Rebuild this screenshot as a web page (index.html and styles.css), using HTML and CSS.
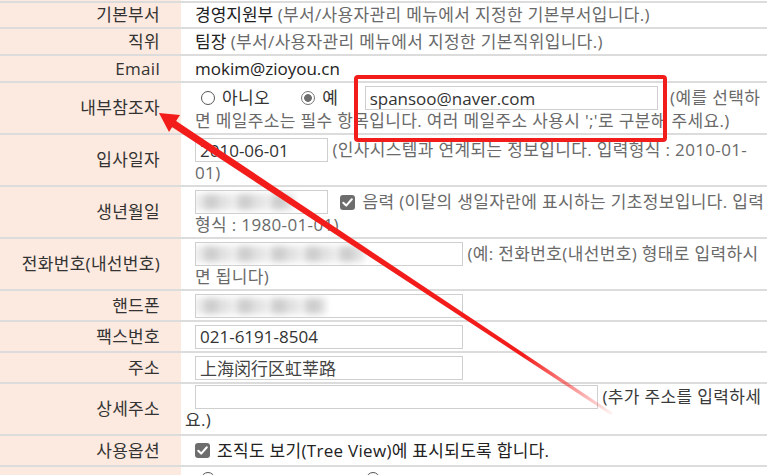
FILE: index.html
```html
<!DOCTYPE html>
<html lang="ko">
<head>
    <meta charset="UTF-8">
    <meta name="viewport" content="width=device-width, initial-scale=1.0">
    <title>사용자 정보 수정</title>
    <link rel="stylesheet" href="styles.css">
</head>
<body>
    <div class="form">
        <div class="row cut"><div class="label"></div><div class="value"></div></div>

        <div class="row first">
            <div class="label">기본부서</div>
            <div class="value"><span>경영지원부 <span class="hint">(부서/사용자관리 메뉴에서 지정한 기본부서입니다.)</span></span></div>
        </div>
        <div class="row">
            <div class="label">직위</div>
            <div class="value"><span>팀장 <span class="hint">(부서/사용자관리 메뉴에서 지정한 기본직위입니다.)</span></span></div>
        </div>
        <div class="row">
            <div class="label">Email</div>
            <div class="value"><span>mokim@zioyou.cn</span></div>
        </div>

        <div class="row double">
            <div class="label">내부참조자</div>
            <div class="value">
                <div class="line">
                    <span class="radio"></span><span class="opt">아니오</span>
                    <span class="radio on"></span><span class="opt">예</span>
                    <input class="input ref" value="spansoo@naver.com">
                    <span class="hint">(예를 선택하</span>
                </div>
                <div class="line2 hint">면 메일주소는 필수 항목입니다. 여러 메일주소 사용시 ';'로 구분해 주세요.)</div>
            </div>
        </div>

        <div class="row double">
            <div class="label">입사일자</div>
            <div class="value">
                <div class="line">
                    <input class="input short" value="2010-06-01">
                    <span class="hint">(인사시스템과 연계되는 정보입니다. 입력형식 : 2010-01-</span>
                </div>
                <div class="line2 hint">01)</div>
            </div>
        </div>

        <div class="row double">
            <div class="label">생년월일</div>
            <div class="value">
                <div class="line">
                    <span class="input short"><span class="smudge birth"></span></span>
                    <span class="check"><svg viewBox="0 0 16 16" width="15" height="15"><path d="M3.5 8.3 L6.6 11.3 L12.6 4.6" fill="none" stroke="#fff" stroke-width="2.2" stroke-linecap="round" stroke-linejoin="round"/></svg></span><span class="hint">음력 (이달의 생일자란에 표시하는 기초정보입니다. 입력</span>
                </div>
                <div class="line2 hint">형식 : 1980-01-01)</div>
            </div>
        </div>

        <div class="row double">
            <div class="label">전화번호(내선번호)</div>
            <div class="value">
                <div class="line">
                    <span class="input mid"><span class="smudge phone"></span></span>
                    <span class="hint">(예: 전화번호(내선번호) 형태로 입력하시</span>
                </div>
                <div class="line2 hint">면 됩니다)</div>
            </div>
        </div>

        <div class="row field">
            <div class="label">핸드폰</div>
            <div class="value">
                <span class="input mid"><span class="smudge mobile"></span></span>
            </div>
        </div>
        <div class="row field">
            <div class="label">팩스번호</div>
            <div class="value"><input class="input mid" value="021-6191-8504"></div>
        </div>
        <div class="row field">
            <div class="label">주소</div>
            <div class="value"><input class="input mid cn" value="上海闵行区虹莘路"></div>
        </div>

        <div class="row double">
            <div class="label">상세주소</div>
            <div class="value tight">
                <div class="line">
                    <input class="input long" value="">
                    <span class="note">(추가 주소를 입력하세</span>
                </div>
                <div class="line2 note">요.)</div>
            </div>
        </div>

        <div class="row field">
            <div class="label">사용옵션</div>
            <div class="value">
                <span class="check first-check"><svg viewBox="0 0 16 16" width="15" height="15"><path d="M3.5 8.3 L6.6 11.3 L12.6 4.6" fill="none" stroke="#fff" stroke-width="2.2" stroke-linecap="round" stroke-linejoin="round"/></svg></span><span class="spaced">조직도 보기(Tree View)에 표시되도록 합니다.</span>
            </div>
        </div>

        <div class="row last">
            <div class="label"></div>
            <div class="value">
                <span class="radio"></span><span class="radio gap"></span>
            </div>
        </div>
    </div>

    <div class="overlay">
        <div class="callout"></div>
        <svg class="arrow" width="773" height="475" viewBox="0 0 773 475">
            <defs>
                <linearGradient id="fade" gradientUnits="userSpaceOnUse" x1="168" y1="120" x2="612" y2="414">
                    <stop offset="0" stop-color="#f21c1a"/>
                    <stop offset="0.8" stop-color="#f21c1a"/>
                    <stop offset="1" stop-color="#f21c1a" stop-opacity="0.05"/>
                </linearGradient>
            </defs>
            <polygon points="170.1,116.9 612.8,412.8 611.2,415.2 165.9,123.1" fill="url(#fade)"/>
            <polygon points="159,113 180,115 169,132" fill="#f21c1a"/>
        </svg>
    </div>
</body>
</html>
```

FILE: styles.css
```css
html, body {
    overflow: hidden;
}

body {
    margin: 0;
    font-family: 'Open Sans', 'Noto Sans CJK KR', sans-serif;
    font-size: 17px;
    color: #222;
    background: #fff;
    position: relative;
    height: 475px;
}

.form {
    width: 767px;
}

.row {
    display: flex;
    box-sizing: border-box;
    height: 27px;
    border-bottom: 2px solid #dcdcdc;
}

.row.cut {
    height: 3px;
}

.row.first {
    height: 26px;
}

.row.double {
    height: 52px;
}

.row.field {
    height: 31px;
}

.row.last {
    height: 40px;
    border-bottom: none;
}

.label {
    width: 181px;
    flex: none;
    box-sizing: border-box;
    background: #fce9df;
    color: #333;
    display: flex;
    align-items: center;
    justify-content: flex-end;
    padding-right: 21px;
    line-height: 22px;
    letter-spacing: 0.3px;
}

.value {
    flex: 1;
    padding-left: 14px;
    display: flex;
    align-items: center;
    line-height: 22px;
    white-space: nowrap;
}

.row.double .value {
    display: block;
    padding-top: 3px;
}

.row.double .value.tight {
    padding-top: 1px;
}

.row.last .value {
    align-items: flex-start;
    padding-top: 5px;
}

.hint {
    color: #6a6a6a;
    letter-spacing: 0.35px;
}

.note {
    color: #3a3a3a;
    letter-spacing: 0.35px;
}

.spaced {
    letter-spacing: 0.3px;
}

.line {
    height: 24px;
    line-height: 24px;
}

.line2 {
    line-height: 22px;
}

.value.tight .line2 {
    margin-left: -10px;
}

.input {
    display: inline-block;
    box-sizing: border-box;
    height: 24px;
    margin: 0;
    padding: 0 4px;
    border: 1px solid #cfcfcf;
    font: inherit;
    color: #333;
    line-height: 22px;
    vertical-align: top;
    background: #fff;
    overflow: hidden;
    outline: none;
}

.input.short { width: 133px; }
.input.mid { width: 268px; }
.input.long { width: 403px; }
.input.ref { width: 293px; margin-left: 22px; margin-right: 8px; }

.input.cn {
    font-family: 'Noto Sans CJK SC', sans-serif;
    color: #444;
}

.smudge {
    display: block;
    height: 16px;
    margin: 3px 0 0 -6px;
    background: repeating-linear-gradient(90deg, #e9e9e9 0 10px, #c9c9c9 10px 24px, #dedede 24px 34px);
    filter: blur(3px);
    opacity: 0.9;
}

.smudge.birth { width: 100px; }
.smudge.phone { width: 170px; }
.smudge.mobile { width: 132px; }

.radio {
    display: inline-block;
    box-sizing: border-box;
    width: 14px;
    height: 14px;
    margin: 0 7px 0 6px;
    border: 1px solid #555;
    border-radius: 50%;
    vertical-align: -1px;
    background: #fff;
}

.radio.on {
    margin-left: 27px;
    border-color: #777;
    background: radial-gradient(circle, #6e6e6e 0 3.5px, #fff 4.2px);
}

.radio.gap {
    margin-left: 144px;
}

.opt {
    color: #333;
    letter-spacing: 0.3px;
}

.check {
    display: inline-block;
    width: 15px;
    height: 15px;
    margin: 0 7px 0 8px;
    border-radius: 3px;
    background: #6d6d6d;
    vertical-align: -2px;
    line-height: 0;
}

.check.first-check {
    margin-left: 0;
}

.overlay {
    position: absolute;
    top: 0;
    left: 0;
    width: 773px;
    height: 475px;
    pointer-events: none;
}

.callout {
    position: absolute;
    left: 354px;
    top: 75px;
    width: 313px;
    height: 67px;
    box-sizing: border-box;
    border: 4px solid #f21c1a;
    border-radius: 4px;
}

.arrow {
    position: absolute;
    top: 0;
    left: 0;
}
```
